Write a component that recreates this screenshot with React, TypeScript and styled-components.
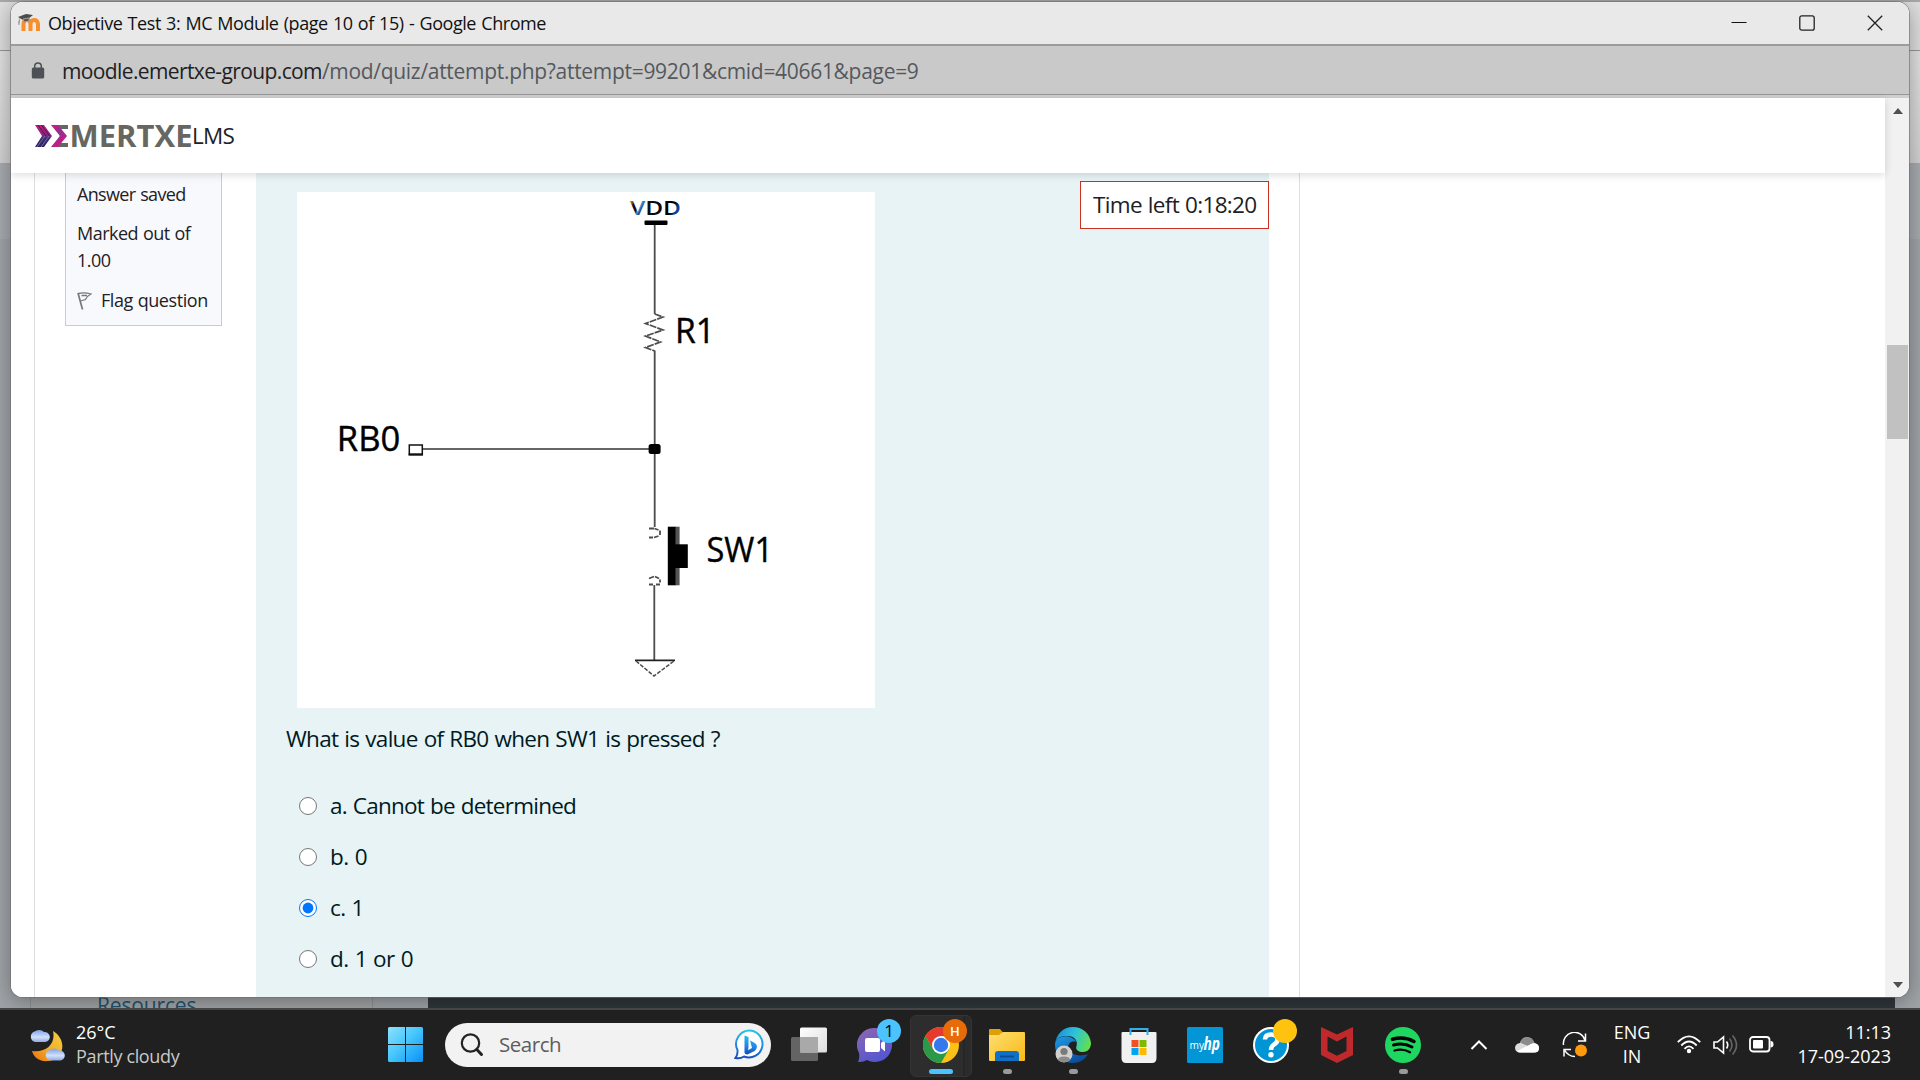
import React from "react";
import styled, { createGlobalStyle } from "styled-components";

const sans = `"Open Sans", "Noto Sans", sans-serif`;

const GlobalStyle = createGlobalStyle`
  * { box-sizing: border-box; }
  body { margin: 0; font-family: ${sans}; background: #202020; overflow: hidden; }
  svg { display: block; flex: none; }
`;

const Desktop = styled.div`
  position: relative;
  width: 1920px;
  height: 1080px;
  display: flex;
  flex-direction: column;
  overflow: hidden;
`;

/* Dimmed browser window behind the popup */
const BackWindow = styled.div`
  height: 1008px;
  display: flex;
  flex-direction: column;
  overflow: hidden;
`;
const BackTabs = styled.div`
  height: 51px;
  background: linear-gradient(#a8a8a8 2px, #dedede 2px);
  border-bottom: 1px solid #969696;
`;
const BackToolbar = styled.div`
  height: 112px;
  background: linear-gradient(#e2e2e2, #d2d2d2);
`;
const BackHeader = styled.div`
  height: 76px;
  background: #a7abaf;
`;
const BackBody = styled.div`
  flex: 1;
  display: flex;
  background: #a0a4a8;
`;
const BackGutter = styled.div<{ $w: number }>`
  width: ${(p) => p.$w}px;
`;
const BackSidebar = styled.div`
  width: 343px;
  background: #a3a4a6;
  border: solid #8e9092;
  border-width: 0 1px;
  display: flex;
  align-items: flex-end;
`;
const BackLink = styled.span`
  height: 13px;
  padding-left: 66px;
  color: #1d5573;
  font-size: 21px;
  letter-spacing: -0.15px;
  line-height: 21px;
`;
const BackContent = styled.div`
  flex: 1;
  background: #2f363b;
`;

/* Popup window */
const Popup = styled.div`
  position: absolute;
  left: 11px;
  top: 2px;
  width: 1898px;
  height: 995px;
  display: flex;
  flex-direction: column;
  border-radius: 12px;
  overflow: hidden;
  background: #fff;
`;
const PopupShadow = styled.div`
  position: absolute;
  left: 11px;
  top: 2px;
  width: 1898px;
  height: 995px;
  border-radius: 12px;
  box-shadow: 0 0 0 1px rgba(110, 110, 110, 0.6), 0 4px 22px rgba(0, 0, 0, 0.35);
`;
/* Keeps the window shadow from falling on the taskbar */
const PopupShadowClip = styled.div`
  position: absolute;
  left: 0;
  top: 0;
  width: 1920px;
  height: 1008px;
  overflow: hidden;
`;
const TitleBar = styled.div`
  height: 44px;
  flex: none;
  display: flex;
  align-items: center;
  padding: 0 26px 1px 6px;
  background: #e9e9e9;
  border-bottom: 2px solid #9c9c9c;
`;
const Title = styled.span`
  margin-left: 7px;
  font-size: 18px;
  letter-spacing: -0.44px;
  word-spacing: 1px;
  color: #111;
  flex: 1;
`;
const WindowButtons = styled.div`
  display: flex;
  gap: 52px;
`;
const UrlBar = styled.div`
  height: 52px;
  flex: none;
  display: flex;
  align-items: center;
  padding: 0 20px 3px;
  background: linear-gradient(#c9c9c9 48px, #979797 48px, #979797 49px, #cfcfcf 49px);
`;
const Domain = styled.span`
  margin-left: 17px;
  font-size: 21px;
  letter-spacing: -0.62px;
  color: #202124;
`;
const UrlPath = styled.span`
  font-size: 21px;
  letter-spacing: -0.3px;
  color: #55585c;
`;
const Viewport = styled.div`
  flex: 1;
  display: flex;
  min-height: 0;
`;
const Page = styled.div`
  flex: 1;
  display: flex;
  flex-direction: column;
  min-width: 0;
  background: #fff;
`;
const Header = styled.header`
  height: 75px;
  flex: none;
  position: relative;
  z-index: 1;
  display: flex;
  align-items: center;
  padding-left: 23px;
  background: #fff;
  box-shadow: 0 2px 8px rgba(0, 0, 0, 0.14);
`;
const Lms = styled.span`
  font-size: 22.5px;
  letter-spacing: -0.8px;
  color: #1d2125;
`;
const Content = styled.main`
  flex: 1;
  display: flex;
  min-height: 0;
`;
const Region = styled.div`
  width: 1266px;
  margin-left: 23px;
  display: flex;
  align-items: stretch;
  border: solid #dcdee1;
  border-width: 0 1px;
`;
const InfoColumn = styled.div`
  width: 221px;
  padding-left: 30px;
`;
const InfoBox = styled.div`
  width: 157px;
  height: 153px;
  padding: 8px 11px 0;
  display: flex;
  flex-direction: column;
  gap: 12px;
  background: #f8f9fc;
  border: 1px solid #c9ccd8;
  border-top: 0;
  font-size: 18px;
  line-height: 27px;
  color: #1d2125;
`;
const InfoLine = styled.div<{ $ls: number }>`
  letter-spacing: ${(p) => p.$ls}px;
  word-spacing: 0.6px;
`;
const FlagLine = styled(InfoLine)`
  display: flex;
  align-items: center;
  gap: 9px;
  margin-top: 1px;
  white-space: nowrap;
`;
const Question = styled.section`
  position: relative;
  width: 1013px;
  padding: 19px 30px 0;
  background: #e7f3f5;
  color: #001a1e;
  font-size: 22.5px;
  word-spacing: 0.8px;
`;
const Figure = styled.div`
  width: 578px;
  height: 516px;
  margin-left: 11px;
  background: #fff;
`;
const Prompt = styled.p`
  margin: 14px 0 28px;
  line-height: 34px;
  height: 30px;
  letter-spacing: -0.69px;
`;
const Option = styled.label<{ $ls: number }>`
  height: 51px;
  display: flex;
  align-items: center;
  padding-left: 13px;
  letter-spacing: ${(p) => p.$ls}px;
`;
const Radio = styled.input`
  width: 18px;
  height: 18px;
  margin: 0 13px 0 0;
`;
const Timer = styled.div`
  position: absolute;
  right: 0;
  top: 8px;
  width: 189px;
  height: 48px;
  padding-left: 12px;
  border: 1px solid #ca3120;
  background: #fff;
  color: #1d2125;
  line-height: 46px;
  letter-spacing: -0.67px;
`;
const Scrollbar = styled.div`
  width: 24px;
  display: flex;
  flex-direction: column;
  align-items: center;
  background: #f1f1f1;
`;
const Arrow = styled.div<{ $down?: boolean }>`
  border: 5.5px solid transparent;
  border-top: ${(p) => (p.$down ? "6px solid #505050" : "0")};
  border-bottom: ${(p) => (p.$down ? "0" : "6px solid #505050")};
  margin: ${(p) => (p.$down ? "auto 0 9px 1px" : "10px 0 0 1px")};
`;
const Thumb = styled.div`
  width: 21px;
  height: 94px;
  margin: 231px 0 0 1px;
  background: #c1c1c1;
`;

/* Taskbar */
const Taskbar = styled.div`
  height: 72px;
  display: flex;
  align-items: center;
  background: #202020;
  border-top: 2px solid #454545;
  padding-bottom: 1px;
  color: #fff;
  font-size: 18px;
`;
const Weather = styled.div`
  width: 359px;
  margin-left: 29px;
  display: flex;
  align-items: center;
  gap: 10px;
`;
const Lines = styled.div<{ $align?: string }>`
  display: flex;
  flex-direction: column;
  align-items: ${(p) => p.$align || "flex-start"};
  padding-bottom: 2px;
  line-height: 24px;
`;
const Muted = styled.span`
  color: #c9c9c9;
  letter-spacing: -0.35px;
`;
const SearchBox = styled.div`
  width: 326px;
  height: 44px;
  margin: 0 5px 0 22px;
  padding: 0 6px 0 15px;
  display: flex;
  align-items: center;
  border-radius: 22px;
  background: #f2f2f2;
`;
const SearchText = styled.span`
  flex: 1;
  margin-left: 15px;
  padding-bottom: 2px;
  font-size: 20.5px;
  letter-spacing: -0.45px;
  color: #5d5d5d;
`;
const AppButton = styled.div<{ $active?: boolean }>`
  position: relative;
  width: 66px;
  height: 60px;
  display: flex;
  align-items: center;
  justify-content: center;
  &::before {
    content: "";
    display: ${(p) => (p.$active ? "block" : "none")};
    position: absolute;
    left: 2px;
    top: 0;
    width: 60px;
    height: 60px;
    border-radius: 6px;
    border: 1px solid #343434;
    background: linear-gradient(90deg, #2d2d2d 52px, #202020 53px, #2b2b2b 54px);
  }
  svg { position: relative; }
`;
const Indicator = styled.div<{ $active?: boolean }>`
  position: absolute;
  bottom: 1px;
  left: ${(p) => (p.$active ? 21 : 28.5)}px;
  width: ${(p) => (p.$active ? 24 : 9)}px;
  height: 5px;
  border-radius: 3px;
  background: ${(p) => (p.$active ? "#4cc2ff" : "#9a9a9a")};
`;
const Badge = styled.div<{ $bg: string; $fg?: string }>`
  position: absolute;
  left: 35px;
  top: 4.5px;
  width: 24px;
  height: 24px;
  border-radius: 50%;
  display: flex;
  align-items: center;
  justify-content: center;
  background: ${(p) => p.$bg};
  color: ${(p) => p.$fg || "#000"};
  font-size: 17px;
  line-height: 24px;
`;
const InitialBadge = styled(Badge)`
  font-size: 13px;
  font-weight: 600;
`;
const TraySlot = styled.div<{ $w: number; $ml?: number }>`
  width: ${(p) => p.$w}px;
  margin-left: ${(p) => p.$ml || 0}px;
  display: flex;
  justify-content: center;
`;
const Clock = styled.div`
  flex: 1;
  padding-right: 29px;
  letter-spacing: -0.05px;
`;

const MoodleIcon = () => (
  <svg width="24" height="20" viewBox="0 0 24 20">
    <path d="M6.500 18V11q0-4 3.500-4T13.500 11v7M13.500 11q0-4 3.500-4T21 11v7" fill="none" stroke="#f98f2b" strokeWidth="4" />
    <path d="M1 4l8-3 7 1-5 4-5 1z" fill="#4b4b4b" />
    <path d="M3 5q-2 4-1 7M6 6l6-1v3l-5 1z" stroke="#a3a09c" fill="#555" strokeWidth="1" />
  </svg>
);

const WideSvg = styled.svg`
  overflow: visible;
`;

const Logo = () => (
  <WideSvg width="158" height="26" viewBox="0 0 158 26">
    <defs>
      <linearGradient id="lg" x1="0" y1="0" x2="0" y2="1">
        <stop offset="0" stopColor="#d01575" />
        <stop offset="0.5" stopColor="#7b2a86" />
        <stop offset="0.6" stopColor="#3b2d73" />
        <stop offset="1" stopColor="#2b2361" />
      </linearGradient>
      <linearGradient id="sg" x1="0" y1="0" x2="0.7" y2="1">
        <stop offset="0" stopColor="#e0127c" />
        <stop offset="0.45" stopColor="#8c3390" />
        <stop offset="1" stopColor="#e0127c" />
      </linearGradient>
    </defs>
    <path d="M1 2h9l8 11-8 11H1l7-11z" fill="url(#lg)" />
    <path d="M4 2l8 11M7.500 2l8 11" stroke="#4a1650" strokeWidth="1" />
    <path d="M3 24l8-11M7 24l8-11" stroke="#8f86b5" strokeWidth="0.700" />
    <path d="M20 2h14v4h-8l6 7-6 7h8v4H18l8-11z" fill="#666760" />
    <path d="M17 2h7l9 11-9 11h-7l9-11z" fill="url(#sg)" />
    <text x="35.500" y="24" textLength="123" lengthAdjust="spacingAndGlyphs" fontFamily={sans} fontSize="30.500" fontWeight="700" fill="#666760">MERTXE</text>
  </WideSvg>
);

const Circuit = () => (
  <svg width="578" height="516" viewBox="0 0 578 516" fontFamily={sans}>
    <defs>
      <linearGradient id="vdd" x1="0" y1="0" x2="1" y2="0.300">
        <stop offset="0" stopColor="#c98432" />
        <stop offset="0.120" stopColor="#b0641c" />
        <stop offset="0.180" stopColor="#0a0a20" />
        <stop offset="0.270" stopColor="#0a0a20" />
        <stop offset="0.320" stopColor="#3f8edc" />
        <stop offset="0.400" stopColor="#111" />
        <stop offset="0.900" stopColor="#000" />
        <stop offset="1" stopColor="#0a3f9c" />
      </linearGradient>
    </defs>
    <text x="333" y="23" fontSize="20.500" fontWeight="600" textLength="51" lengthAdjust="spacingAndGlyphs" fill="url(#vdd)">VDD</text>
    <rect x="347.500" y="28.500" width="23" height="4.500" rx="1" />
    <g fill="none" stroke="#4c4c4c" strokeWidth="1.800">
      <path d="M357.700 33V122M357.700 158.500V335M357.300 393V468" />
      <path d="M126 257H352" strokeWidth="1.500" stroke="#333" />
      <path d="M357.700 122L366 125L348.500 131.500L366 138L348.500 144L363.500 150L348.500 155.500L357.700 159" strokeWidth="1.700" strokeDasharray="7 1" />
      <path d="M352 336.500h5M352 345.500h4M357.500 336.500l4 1.500M357 345.500l4.500-1.500M363 338.500v4.500" />
      <path d="M352 386.500l5-2M358 384.500l4 2M363 387.500v3M352 392.500h4M359 392.500h4" />
      <path d="M338 468.300H378" stroke="#222" />
      <path d="M339 469L357 484L377 469" strokeDasharray="4 1.500" strokeWidth="1.500" />
    </g>
    <rect x="351.600" y="252" width="12" height="10" rx="2.500" />
    <path d="M112.300 253H125.300V262.500H112.300Z" fill="#fff" stroke="#111" strokeWidth="1.500" />
    <path d="M111.600 262.500H126" stroke="#111" strokeWidth="2.200" />
    <rect x="378" y="334.700" width="4.600" height="58.600" fill="#555" />
    <rect x="370.800" y="334.700" width="7.700" height="58.600" />
    <rect x="378" y="352.300" width="12.800" height="23.700" />
    <g stroke="#000" strokeWidth="0.400">
      <text x="39.800" y="259.300" fontSize="34" textLength="63.500" lengthAdjust="spacingAndGlyphs">RB0</text>
      <text x="378" y="151.200" fontSize="34.500" textLength="40" lengthAdjust="spacingAndGlyphs">R1</text>
      <text x="409.500" y="370.200" fontSize="34.500" textLength="66.500" lengthAdjust="spacingAndGlyphs">SW1</text>
    </g>
  </svg>
);

const cloud = "M6 14a5.500 5.500 0 0 1-.5-10.500A7 7 0 0 1 15 4a5 5 0 0 1 1.500 10z";
const WeatherIcon = () => (
  <svg width="37" height="34" viewBox="0 0 37 34">
    <defs>
      <linearGradient id="moon" x1="1" y1="0" x2="0" y2="1"><stop offset="0" stopColor="#f5cf4a" /><stop offset="0.550" stopColor="#f3ac25" /><stop offset="1" stopColor="#ee6c12" /></linearGradient>
      <linearGradient id="cl" x1="0" y1="0" x2="0" y2="1"><stop offset="0" stopColor="#7ba0ea" /><stop offset="0.600" stopColor="#d3e0fa" /><stop offset="1" stopColor="#8fa9e2" /></linearGradient>
    </defs>
    <path d="M24 3C38 11 36 31 20 33C11 34 5 30 3 23C17 25 27 16 24 3Z" fill="url(#moon)" />
    <path d={cloud} transform="translate(0 0)" fill="url(#cl)" />
    <path d={cloud} transform="translate(15 18.500)" fill="url(#cl)" />
  </svg>
);
const StartIcon = () => (
  <svg width="35" height="35" viewBox="0 0 35 35">
    <defs><linearGradient id="win" x1="0" y1="0" x2="1" y2="1"><stop offset="0" stopColor="#8be2ff" /><stop offset="0.500" stopColor="#43c4fb" /><stop offset="1" stopColor="#0890f8" /></linearGradient></defs>
    <path d="M1.500 0H17V17H0V1.500Q0 0 1.500 0ZM18 0H33.500Q35 0 35 1.500V17H18ZM0 18H17V35H1.500Q0 35 0 33.500ZM18 18H35V33.500Q35 35 33.500 35H18Z" fill="url(#win)" />
  </svg>
);
const BingIcon = () => (
  <svg width="31" height="31" viewBox="0 0 31 31">
    <defs><linearGradient id="bg" x1="0.500" y1="0" x2="0.400" y2="1"><stop offset="0" stopColor="#20c4ea" /><stop offset="0.550" stopColor="#2388e8" /><stop offset="1" stopColor="#144dbd" /></linearGradient></defs>
    <path d="M16 1.500A13.500 13.500 0 1 1 10 27.500Q6 30 1.500 29Q4 26 3.500 21A13.500 13.500 0 0 1 16 1.500Z" fill="#fff" stroke="url(#bg)" strokeWidth="2" />
    <path d="M10.500 6.500l4 1.500v10l-.5 3.500-3.500 2zM16 11.500l4 2q4 2 2.500 6-1 2.500-4 3.500l-5 2.500q-3 0-3-2.500l7.500-4z" fill="url(#bg)" />
  </svg>
);
const TaskViewIcon = () => (
  <svg width="36" height="35" viewBox="0 0 36 35">
    <defs><linearGradient id="tv" x1="0" y1="0" x2="1" y2="1"><stop offset="0" stopColor="#fff" /><stop offset="1" stopColor="#dcdcdc" /></linearGradient></defs>
    <rect x="0" y="10" width="27" height="24" rx="1.500" fill="#646464" />
    <rect x="9" y="0.500" width="27" height="25" rx="1.500" fill="url(#tv)" />
    <path d="M9 10H27V25.500H9Z" fill="#a9a9a9" />
  </svg>
);
const ChatIcon = () => (
  <svg width="36" height="36" viewBox="0 0 36 36">
    <defs><linearGradient id="ch" x1="0" y1="0" x2="0.500" y2="1"><stop offset="0" stopColor="#9067b0" /><stop offset="1" stopColor="#5557cf" /></linearGradient></defs>
    <path d="M18 1A17 17 0 1 1 10 33Q6 35.500 1 35Q3 31 2 26A17 17 0 0 1 18 1Z" fill="url(#ch)" />
    <rect x="8" y="11" width="15" height="14" rx="2" fill="#fff" />
    <path d="M24 16l4-3.500v12l-4-3.500z" fill="#fff" />
  </svg>
);
const ChromeIcon = () => (
  <svg width="36" height="36" viewBox="0 0 36 36">
    <circle cx="18" cy="18" r="18" fill="#fbc116" />
    <path d="M18 9H33.600A18 18 0 0 0 2.400 9L10.200 22.500Z" fill="#e33b2e" />
    <path d="M2.400 9A18 18 0 0 0 18 36L25.800 22.500L18 18L10.200 22.500Z" fill="#2b9a48" />
    <circle cx="18" cy="18" r="9" fill="#fff" />
    <circle cx="18" cy="18" r="7.200" fill="#3478ee" />
  </svg>
);
const ExplorerIcon = () => (
  <svg width="36" height="36" viewBox="0 0 36 36">
    <defs><linearGradient id="fo" x1="0" y1="0" x2="1" y2="1"><stop offset="0" stopColor="#ffdf73" /><stop offset="1" stopColor="#f9b914" /></linearGradient></defs>
    <path d="M0 3Q0 2 1 2H11L14 5.500V10H0Z" fill="#dfa005" />
    <path d="M0 8H10L14 5H35Q36 5 36 6V33Q36 34 35 34H1Q0 34 0 33Z" fill="url(#fo)" />
    <path d="M6 34V27Q6 24 9 24H27Q30 24 30 27V34Z" fill="#0f70c8" />
    <path d="M11 29.500H25" stroke="#0a4a91" strokeWidth="1.800" />
  </svg>
);
const EdgeIcon = () => (
  <svg width="36" height="36" viewBox="0 0 36 36">
    <defs>
      <linearGradient id="e1" x1="0" y1="0.300" x2="1" y2="0.600"><stop offset="0" stopColor="#1a8fd8" /><stop offset="0.500" stopColor="#2fc3d8" /><stop offset="1" stopColor="#62e04c" /></linearGradient>
      <linearGradient id="e2" x1="0" y1="0" x2="0.600" y2="1"><stop offset="0" stopColor="#1f9be4" /><stop offset="1" stopColor="#0b4d9d" /></linearGradient>
    </defs>
    <path d="M0 18C0 10 7 9 12 9C20 9 23 14 21.500 19C20 23 24 25 28 25C33 25 36 21 36 16C35 6 27 0 18 0C8 0 1 7 0 18Z" fill="url(#e1)" />
    <path d="M0 18C0 11 7 8.500 13 9.500C18 10.500 21 13 21 15C15 13 12 18 14 23C16 28 25 30 33 27C30 33 24 36 18 36C8 36 0 28 0 18Z" fill="url(#e2)" />
    <circle cx="9" cy="27" r="8.500" fill="#d2d0ce" />
    <circle cx="9" cy="24.500" r="3.600" fill="#7c7a78" />
    <path d="M3 33Q3 29.500 9 29.500T15 33Q9 37.500 3 33Z" fill="#8d8b89" />
  </svg>
);
const StoreIcon = () => (
  <svg width="36" height="36" viewBox="0 0 36 36">
    <path d="M0.500 6Q0.500 5 1.500 5H34.500Q35.500 5 35.500 6V31Q35.500 36 31 36H5Q0.500 36 0.500 31Z" fill="#f1f1f1" />
    <path d="M9.500 8V2H26.500V8" fill="none" stroke="#35aee8" strokeWidth="2" />
    <path d="M10.500 13h7v7h-7z" fill="#f25022" /><path d="M18.500 13h7v7h-7z" fill="#7fba00" />
    <path d="M10.500 21h7v7h-7z" fill="#00a4ef" /><path d="M18.500 21h7v7h-7z" fill="#ffb900" />
  </svg>
);
const MyHpIcon = () => (
  <svg width="36" height="36" viewBox="0 0 36 36" fill="#fff">
    <rect width="36" height="36" rx="1.500" fill="#0296d6" />
    <text x="2.500" y="21.500" fontFamily={sans} fontSize="11" textLength="14.500" lengthAdjust="spacingAndGlyphs">my</text>
    <text x="16.500" y="22.500" fontFamily={sans} fontSize="17" fontWeight="700" fontStyle="italic" textLength="16.500" lengthAdjust="spacingAndGlyphs">hp</text>
  </svg>
);
const HelpIcon = () => (
  <svg width="36" height="36" viewBox="0 0 36 36">
    <circle cx="18" cy="18" r="17" fill="#0096d6" stroke="#fff" strokeWidth="2" />
    <path d="M12 12.500Q12 7.500 18 7.500Q24.500 7.500 24.500 12.500Q24.500 15.500 21 17.500Q18 19.500 18 23" fill="none" stroke="#fff" strokeWidth="4.500" />
    <circle cx="18" cy="27.700" r="2.700" fill="#fff" />
  </svg>
);
const McAfeeIcon = () => (
  <svg width="36" height="36" viewBox="0 0 36 36">
    <path d="M2 0L18 7.500L34 0V28L18 36L2 28ZM8.500 9.500V24L18 28.700L27.500 24V9.500L18 14.500Z" fill="#c0292b" fillRule="evenodd" />
  </svg>
);
const SpotifyIcon = () => (
  <svg width="36" height="36" viewBox="0 0 36 36">
    <circle cx="18" cy="18" r="18" fill="#1ed760" />
    <g fill="none" stroke="#000" strokeLinecap="round">
      <path d="M7.500 12.300Q19 9 29 14.500" strokeWidth="3.500" />
      <path d="M8.500 18Q18.500 15.300 27 20" strokeWidth="2.900" />
      <path d="M9.500 23.500Q18 21.300 25 25.300" strokeWidth="2.300" />
    </g>
  </svg>
);

const apps = [
  { icon: <TaskViewIcon /> },
  { icon: <ChatIcon />, badge: <Badge $bg="#4cc2ff">1</Badge> },
  { icon: <ChromeIcon />, badge: <InitialBadge $bg="#e96a08" $fg="#fff">H</InitialBadge>, active: true, running: true },
  { icon: <ExplorerIcon />, running: true },
  { icon: <EdgeIcon />, running: true },
  { icon: <StoreIcon /> },
  { icon: <MyHpIcon /> },
  { icon: <HelpIcon />, badge: <Badge $bg="#ffc20e" /> },
  { icon: <McAfeeIcon /> },
  { icon: <SpotifyIcon />, running: true },
];

const options = [
  { label: "a. Cannot be determined", ls: -0.76 },
  { label: "b. 0", ls: -0.5 },
  { label: "c. 1", ls: -0.6, checked: true },
  { label: "d. 1 or 0", ls: -0.55 },
];

export default function App() {
  return (
    <Desktop>
      <GlobalStyle />
      <BackWindow>
        <BackTabs />
        <BackToolbar />
        <BackHeader />
        <BackBody>
          <BackGutter $w={30} />
          <BackSidebar><BackLink>Resources</BackLink></BackSidebar>
          <BackGutter $w={55} />
          <BackContent />
          <BackGutter $w={25} />
        </BackBody>
      </BackWindow>

      <Taskbar>
        <Weather>
          <WeatherIcon />
          <Lines><span>26°C</span><Muted>Partly cloudy</Muted></Lines>
        </Weather>
        <StartIcon />
        <SearchBox>
          <svg width="24" height="24" viewBox="0 0 24 24" fill="none" stroke="#222" strokeWidth="2.200" strokeLinecap="round">
            <circle cx="10.500" cy="10" r="8.700" /><path d="M16.800 16.500L21.500 21.500" strokeWidth="3" />
          </svg>
          <SearchText>Search</SearchText>
          <BingIcon />
        </SearchBox>
        {apps.map((a, i) => (
          <AppButton key={i} $active={a.active}>
            {a.icon}
            {a.badge}
            {a.running && <Indicator $active={a.active} />}
          </AppButton>
        ))}
        <TraySlot $w={48} $ml={19}>
          <svg width="18" height="12" viewBox="0 0 18 12" fill="none" stroke="#fff" strokeWidth="2"><path d="M1.500 10L9 2.500L16.500 10" /></svg>
        </TraySlot>
        <TraySlot $w={48}>
          <svg width="24" height="16" viewBox="0 0 24 16">
            <path d="M5 6Q7 0 12.500 0.200Q17.500 0.500 19.500 6Q24 7 24 11Q24 15.500 19 15.500H5.500Q0 15.500 0 10.500Q0.500 6.500 5 6Z" fill="#dcdcdc" />
            <path d="M5 5.500Q7 0 12.500 0.200Q17.500 0.500 19.500 6L13 9Z" fill="#8c8c8c" />
            <path d="M2 14L15 7.500Q18 5.500 21 6.800Q24 8 24 11Q24 15.500 19 15.500H5.500Q3 15.500 2 14Z" fill="#fff" />
          </svg>
        </TraySlot>
        <TraySlot $w={48}>
          <svg width="26" height="26" viewBox="0 0 26 26" fill="none" stroke="#fff" strokeWidth="1.500">
            <path d="M1.500 13A11 11 0 0 1 23 8.500M23.500 1.500V9H16M2 24.500V17.500H9M2.500 18Q6 24.500 13 24.500" />
            <circle cx="19" cy="18.500" r="6" fill="#ff9a0a" stroke="none" />
          </svg>
        </TraySlot>
        <TraySlot $w={66}><Lines $align="center"><span>ENG</span><span>IN</span></Lines></TraySlot>
        <TraySlot $w={36} $ml={6}>
          <svg width="24" height="19" viewBox="0 0 24 19" fill="none" stroke="#fff" strokeWidth="1.900">
            <path d="M0.800 7.200Q12-4.500 23.200 7.200M4.300 10.500Q12 2.500 19.700 10.500M7.500 13.800Q12 9 16.500 13.800" />
            <circle cx="12" cy="16" r="2.200" fill="#fff" stroke="none" />
          </svg>
        </TraySlot>
        <TraySlot $w={36}>
          <svg width="25" height="22" viewBox="0 0 25 22" fill="none" stroke="#fff" strokeWidth="1.600">
            <path d="M1 8H4.500L10.500 3V19L4.500 14H1Z" />
            <path d="M13.500 7.500Q16 11 13.500 14.500" />
            <path d="M16.500 4.500Q21.500 11 16.500 17.500M19.500 1.500Q27.500 11 19.500 20.500" stroke="#656565" />
          </svg>
        </TraySlot>
        <TraySlot $w={36}>
          <svg width="25" height="17" viewBox="0 0 25 17">
            <rect x="1" y="1" width="19.500" height="14.500" rx="3" fill="none" stroke="#fff" strokeWidth="1.800" />
            <rect x="4" y="4" width="10" height="8.500" rx="1" fill="#fff" /><path d="M21.500 5q3 0 3 3.200t-3 3.300z" fill="#fff" />
          </svg>
        </TraySlot>
        <Clock><Lines $align="flex-end"><span>11:13</span><span>17-09-2023</span></Lines></Clock>
      </Taskbar>

      <PopupShadowClip><PopupShadow /></PopupShadowClip>
      <Popup>
        <TitleBar>
          <MoodleIcon />
          <Title>Objective Test 3: MC Module (page 10 of 15) - Google Chrome</Title>
          <WindowButtons>
            <svg width="16" height="16" viewBox="0 0 16 16"><path d="M0.500 7.500H15.500" stroke="#111" strokeWidth="1.200" /></svg>
            <svg width="16" height="16" viewBox="0 0 16 16"><rect x="0.800" y="0.800" width="14.400" height="14.400" rx="2" fill="none" stroke="#222" strokeWidth="1.300" /></svg>
            <svg width="16" height="16" viewBox="0 0 16 16"><path d="M0.800 0.800L15.200 15.200M15.200 0.800L0.800 15.200" stroke="#222" strokeWidth="1.300" /></svg>
          </WindowButtons>
        </TitleBar>
        <UrlBar>
          <svg width="14" height="17" viewBox="0 0 14 17">
            <rect x="0.800" y="5.500" width="12.400" height="11" rx="1.500" fill="#4d5156" />
            <path d="M3.700 6V4.300a3.300 3.300 0 0 1 6.600 0V6" fill="none" stroke="#4d5156" strokeWidth="1.500" />
          </svg>
          <Domain>moodle.emertxe-group.com</Domain>
          <UrlPath>/mod/quiz/attempt.php?attempt=99201&amp;cmid=40661&amp;page=9</UrlPath>
        </UrlBar>
        <Viewport>
          <Page>
            <Header><Logo /><Lms>LMS</Lms></Header>
            <Content>
              <Region>
                <InfoColumn>
                  <InfoBox>
                    <InfoLine $ls={-0.65}>Answer saved</InfoLine>
                    <InfoLine $ls={-0.5}>Marked out of 1.00</InfoLine>
                    <FlagLine $ls={-0.44}>
                      <svg width="15" height="18" viewBox="0 0 15 18" fill="none" stroke="#777" strokeWidth="1.300">
                        <path d="M1 1L5.500 17.500" strokeWidth="1.700" /><path d="M1.500 1.500Q7 0 14 2Q10 4 8.500 7.500L3.500 9M4.500 3.500L10 3.500" />
                      </svg>
                      Flag question
                    </FlagLine>
                  </InfoBox>
                </InfoColumn>
                <Question>
                  <Figure><Circuit /></Figure>
                  <Prompt>What is value of RB0 when SW1 is pressed ?</Prompt>
                  {options.map((o) => (
                    <Option key={o.label} $ls={o.ls}>
                      <Radio type="radio" name="answer" defaultChecked={o.checked} />
                      {o.label}
                    </Option>
                  ))}
                  <Timer>Time left 0:18:20</Timer>
                </Question>
              </Region>
            </Content>
          </Page>
          <Scrollbar>
            <Arrow />
            <Thumb />
            <Arrow $down />
          </Scrollbar>
        </Viewport>
      </Popup>
    </Desktop>
  );
}
